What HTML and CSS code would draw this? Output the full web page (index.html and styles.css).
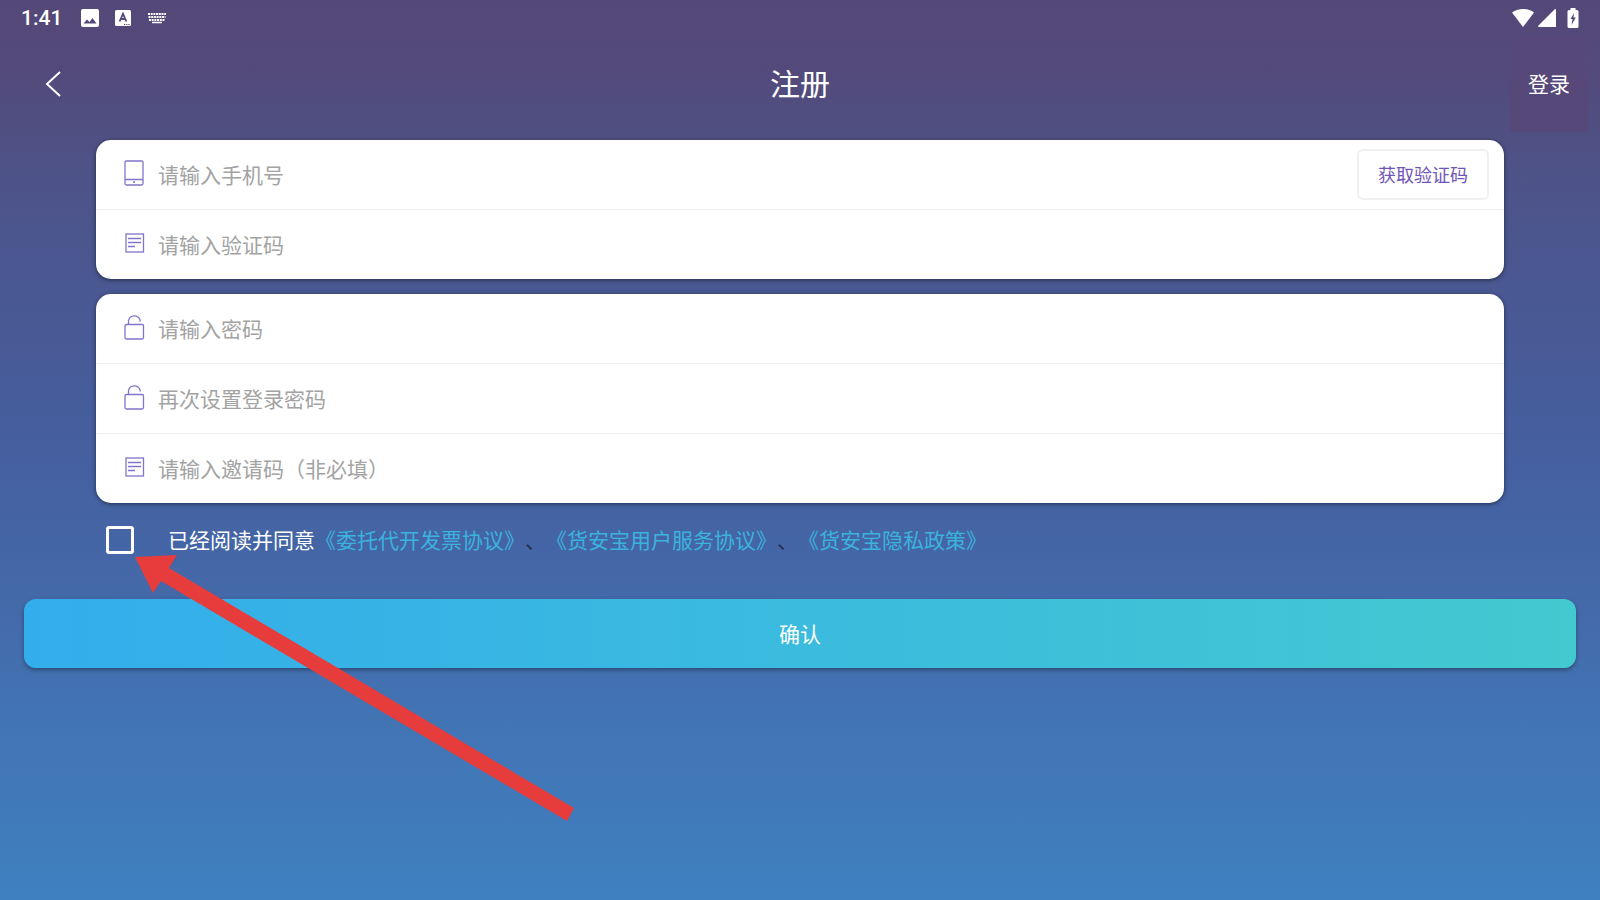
FILE: index.html
```html
<!DOCTYPE html>
<html lang="zh-CN">
<head>
  <meta charset="UTF-8" />
  <meta name="viewport" content="width=device-width, initial-scale=1.0" />
  <title>注册</title>
  <link rel="stylesheet" href="styles.css">
</head>
<body>
  <!-- shared icons -->
  <svg class="sprite" width="0" height="0" aria-hidden="true">
    <symbol id="icon-phone" viewBox="0 0 22 28">
      <rect x="2" y="2" width="18" height="24" rx="1.5" />
      <path d="M2 20.500h18M10 23h2" />
    </symbol>
    <symbol id="icon-code" viewBox="0 0 22 28">
      <rect x="3" y="5" width="17.500" height="18" />
      <path d="M5 9.500h13M5 13.500h13M5 17.500h7" />
    </symbol>
    <symbol id="icon-lock" viewBox="0 0 22 28">
      <rect x="2" y="11.500" width="18.500" height="14.500" rx="1.500" />
      <path d="M5.500 11.500V7.500a6 6 0 0 1 11.500-.500l.300 1.500" />
    </symbol>
  </svg>

  <div class="status-bar">
    <span class="clock">1:41</span>
    <svg class="status-icon" width="18" height="18" viewBox="0 0 18 18">
      <path fill="#fff" fill-rule="evenodd" d="M2 0h14a2 2 0 0 1 2 2v14a2 2 0 0 1-2 2H2a2 2 0 0 1-2-2V2a2 2 0 0 1 2-2zM2.500 14.500h13L11.500 9l-3 4-2.500-2.500z" />
    </svg>
    <svg class="status-icon" width="16" height="16" viewBox="0 0 16 16">
      <rect width="16" height="16" rx="1.500" fill="#fff" />
      <path d="M4.600 11.500L8 3.800l3.400 7.700M5.800 9h4.400" fill="none" stroke="#544979" stroke-width="1.800" />
      <path d="M9 14.500h6" stroke="#544979" stroke-width="1.200" stroke-dasharray="1.200 1" />
    </svg>
    <svg class="status-icon" width="20" height="18" viewBox="0 0 20 18">
      <g stroke="#fff" fill="none">
        <path d="M1 5h18" stroke-width="2" stroke-dasharray="2 .7" />
        <path d="M1.500 8h17" stroke-width="2" stroke-dasharray="2 .7" />
        <path d="M2 11h16" stroke-width="2" stroke-dasharray="2 .7" />
        <path d="M5 13.500h10" stroke-width="1.500" />
      </g>
    </svg>
    <div class="signals">
      <svg width="24" height="20" viewBox="0 0 24 20">
        <path fill="#fff" d="M1 4.500C7-.200 17-.200 23 4.500L12 19z" />
      </svg>
      <svg width="18" height="20" viewBox="0 0 18 20">
        <path fill="#fff" d="M17 1q1 0 1 1v17H1q-1.500 0-.500-1.500z" />
      </svg>
      <svg class="battery" width="12" height="20" viewBox="0 0 12 20">
        <path fill="#fff" fill-rule="evenodd" d="M3.500 0h5v2H10a1.500 1.500 0 0 1 1.500 1.500v15A1.500 1.500 0 0 1 10 20H2A1.500 1.500 0 0 1 .500 18.500v-15A1.500 1.500 0 0 1 2 2h1.500zM7 5L3.500 11h2L4.500 17 8.800 9.500H6.500z" />
      </svg>
    </div>
  </div>

  <header class="header">
    <button type="button" class="back" aria-label="返回">
      <svg width="16" height="28" viewBox="0 0 16 28">
        <path d="M15 2L2 14l13 12" fill="none" stroke="#fff" stroke-width="2" />
      </svg>
    </button>
    <h1 class="title">注册</h1>
    <button type="button" class="login">登录</button>
  </header>

  <form class="register">
    <div class="card">
      <div class="row">
        <label for="phone" aria-label="手机号"><svg class="icon"><use href="#icon-phone" /></svg></label>
        <input type="tel" id="phone" placeholder="请输入手机号" />
        <button type="button" class="get-code">获取验证码</button>
      </div>
      <div class="row">
        <label for="code" aria-label="验证码"><svg class="icon"><use href="#icon-code" /></svg></label>
        <input type="text" id="code" placeholder="请输入验证码" />
      </div>
    </div>

    <div class="card">
      <div class="row">
        <label for="password" aria-label="密码"><svg class="icon"><use href="#icon-lock" /></svg></label>
        <input type="password" id="password" placeholder="请输入密码" />
      </div>
      <div class="row">
        <label for="password2" aria-label="再次设置登录密码"><svg class="icon"><use href="#icon-lock" /></svg></label>
        <input type="password" id="password2" placeholder="再次设置登录密码" />
      </div>
      <div class="row">
        <label for="invite" aria-label="邀请码"><svg class="icon"><use href="#icon-code" /></svg></label>
        <input type="text" id="invite" placeholder="请输入邀请码（非必填）" />
      </div>
    </div>

    <div class="agreement">
      <input type="checkbox" id="agree" />
      <p><label for="agree">已经阅读并同意</label><a href="#">《委托代开发票协议》</a>、<a href="#">《货安宝用户服务协议》</a>、<a href="#">《货安宝隐私政策》</a></p>
    </div>

    <button type="submit" class="confirm">确认</button>
  </form>

  <!-- pointer to the agreement checkbox -->
  <svg class="arrow" width="442" height="268" viewBox="0 0 442 268" aria-hidden="true">
    <path fill="#e73c3c" d="M1 3L43 1l-8 13 405 240-7 13L27 27l-8 12z" />
  </svg>
</body>
</html>
```

FILE: styles.css
```css
* {
  box-sizing: border-box;
}

body {
  margin: 0;
  min-height: 100vh;
  position: relative;
  font-family: "Noto Sans CJK SC", sans-serif;
  font-size: 21px;
  line-height: 30px;
  color: #fff;
  background: linear-gradient(#544878 0%, #534a7b 8%, #4e5286 18%, #4a5791 30%, #455f9f 50%, #446aaa 68%, #4274b4 80%, #3f80c0 100%);
  text-spacing-trim: space-all;
}

button, input {
  font: inherit;
  color: inherit;
}

button {
  padding: 0 0 2px;
  border: none;
  background: none;
  cursor: pointer;
}

.sprite {
  position: absolute;
}

.status-bar {
  display: flex;
  align-items: center;
  gap: 16px;
  height: 36px;
  padding: 0 21px;
}

.clock {
  font-family: Roboto, sans-serif;
  font-weight: 500;
  margin-right: 3px;
}

.signals {
  display: flex;
  align-items: center;
  gap: 3px;
  margin-left: auto;
}

.battery {
  margin-left: 8px;
}

.header {
  display: grid;
  grid-template-columns: 78px 1fr 78px;
  height: 96px;
  padding: 0 12px;
}

.back {
  display: flex;
  align-items: center;
  padding: 0 0 0 33px;
}

.title {
  margin: 0;
  font-size: 30px;
  font-weight: 400;
  line-height: 92px;
  text-align: center;
}

.login {
  background: #564878;
}

.register {
  padding: 8px 24px 24px;
}

.card {
  margin: 0 72px 15px;
  border-radius: 15px;
  background: #fff;
  box-shadow: 0 1px 4px rgba(0, 0, 0, 0.5);
}

.row {
  display: flex;
  align-items: center;
  height: 70px;
  padding: 0 15px 0 27px;
  border-bottom: 1px solid #eee;
}

.row:last-child {
  height: 69px;
  border-bottom: none;
}

.row label {
  display: flex;
  padding-bottom: 3px;
}

.icon {
  width: 22px;
  height: 28px;
  fill: none;
  stroke: #8273cc;
  stroke-width: 1.3;
}

.row input {
  flex: 1;
  min-width: 0;
  height: 48px;
  margin-left: 13px;
  padding: 0 0 2px;
  border: none;
  outline: none;
  background: none;
  color: #333;
}

.row input::placeholder {
  color: #a3a3a3;
}

.get-code {
  width: 132px;
  height: 51px;
  border: 2px solid #f0f0f0;
  border-radius: 6px;
  font-size: 18px;
  color: #7055b8;
}

.agreement {
  display: flex;
  align-items: center;
  gap: 34px;
  height: 44px;
  padding-left: 82px;
  margin-bottom: 37px;
  color: #222c48;
}

.agreement p {
  margin: 0;
  padding-bottom: 2px;
}

.agreement label {
  color: #fff;
}

.agreement a {
  color: #3bb3de;
  text-decoration: none;
}

.agreement input {
  appearance: none;
  width: 28px;
  height: 28px;
  margin: 0;
  border: 3px solid #fff;
  border-radius: 3px;
}

.agreement input:checked {
  background: #3bb3de;
}

.confirm {
  display: block;
  width: 100%;
  height: 69px;
  border-radius: 12px;
  background: linear-gradient(90deg, #33adec, #43c9d0);
  box-shadow: 0 2px 4px rgba(0, 0, 0, 0.35);
}

.arrow {
  position: absolute;
  left: 134px;
  top: 554px;
  pointer-events: none;
}
```
